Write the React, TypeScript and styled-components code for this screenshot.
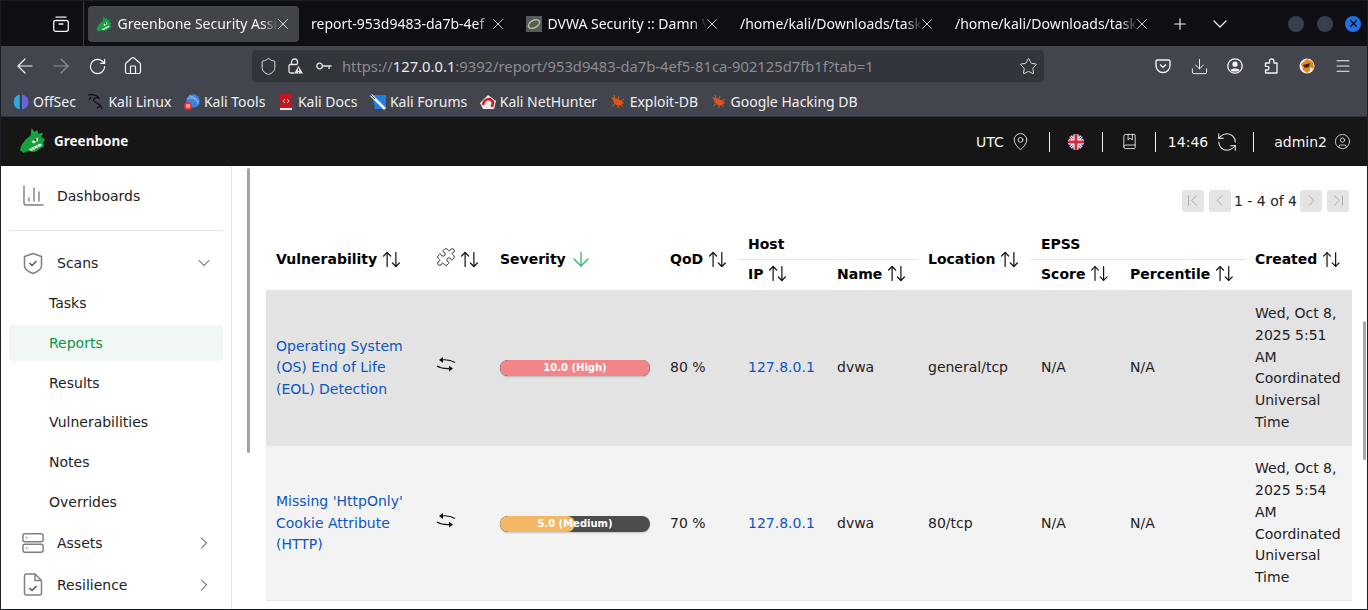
import React from 'react'
import styled, { createGlobalStyle } from 'styled-components'
import {
  ArrowDown, ArrowLeft, ArrowRight, ArrowUpDown, BookMarked, ChevronDown, ChevronFirst, ChevronLast, ChevronLeft,
  ChevronRight, CircleUser, Download, House, MapPin, Menu, Plus, Puzzle,
  RefreshCcw, RotateCw, Shield, Star, X,
} from 'lucide-react'

const GlobalStyle = createGlobalStyle`
  html, body { margin: 0; padding: 0; height: 610px; overflow: hidden; background: #fff; }
  body { font-family: "DejaVu Sans", sans-serif; }
  * { box-sizing: border-box; }
`

const chromeFont = `"Noto Sans", "Open Sans", sans-serif`

const Window = styled.div`
  width: 1368px;
  height: 610px;
  display: flex;
  flex-direction: column;
  overflow: hidden;
  position: relative;
  border: 1px solid #1c1e26;
`

const TabStrip = styled.div`
  height: 45px;
  flex: none;
  background: #0e0f14;
  display: flex;
  align-items: center;
  padding-left: 50px;
  font-family: ${chromeFont};
  font-size: 14px;
`

const TabsButton = styled.div`
  width: 33px;
  height: 45px;
  padding-left: 2px;
  display: flex;
  align-items: center;
  color: #f1f1f1;
  border-right: 1px solid #3a3c44;
`

const Tab = styled.div<{ $active?: boolean; $width: number }>`
  width: ${p => p.$width}px;
  height: 36px;
  flex: none;
  display: flex;
  align-items: center;
  gap: 5.5px;
  padding: 0 7px 0 ${p => (p.$active ? 8 : 12)}px;
  border-radius: 4px;
  margin-left: ${p => (p.$active ? 4 : 0)}px;
  background: ${p => (p.$active ? '#42444c' : 'transparent')};
  color: #f4f4f5;
`

const TabTitle = styled.span`
  flex: 1;
  min-width: 0;
  white-space: nowrap;
  overflow: hidden;
  -webkit-mask-image: linear-gradient(to right, #000 calc(100% - 16px), transparent);
  mask-image: linear-gradient(to right, #000 calc(100% - 16px), transparent);
`

const TabClose = styled.div`
  display: flex;
  margin-left: -9px;
`

const StripButton = styled.div<{ $left: number }>`
  margin-left: ${p => p.$left}px;
  display: flex;
  color: #f4f4f5;
`

const WindowControls = styled.div`
  margin-left: auto;
  margin-right: 6px;
  display: flex;
  gap: 12.5px;
`

const WindowDot = styled.div<{ $close?: boolean }>`
  width: 16px;
  height: 16px;
  border-radius: 50%;
  background: ${p => (p.$close ? '#2170e8' : '#3a3e4c')};
  color: #0e0f14;
  display: flex;
  align-items: center;
  justify-content: center;
`

const Toolbar = styled.div`
  height: 38px;
  flex: none;
  background: #42454e;
  display: flex;
  align-items: center;
  padding: 2px 0 0 6px;
  color: #f4f4f5;
  font-family: ${chromeFont};
`

const NavGroup = styled.div`
  width: 245px;
  flex: none;
  display: flex;
  align-items: center;
`

const ToolSlot = styled.div<{ $muted?: boolean }>`
  width: 36px;
  flex: none;
  display: flex;
  justify-content: center;
  color: ${p => (p.$muted ? '#8f9096' : 'inherit')};
`

const UrlBar = styled.div`
  width: 792px;
  height: 32px;
  flex: none;
  border-radius: 4px;
  background: #33353c;
  display: flex;
  align-items: center;
  padding: 0 6px 0 7px;
  color: #e4e4e6;
`

const UrlIcon = styled.div<{ $right: number }>`
  display: flex;
  margin-right: ${p => p.$right}px;
`

const UrlText = styled.div`
  font-size: 14.75px;
  line-height: 32px;
  color: #8b8c92;
  white-space: nowrap;
  flex: 1;
  strong { font-weight: 400; color: #e9e9ea; }
`

const ToolGroup = styled.div`
  margin-left: 101px;
  display: flex;
  align-items: center;
`

const BookmarkBar = styled.div`
  height: 33px;
  flex: none;
  background: #42454e;
  border-bottom: 1px solid #30323a;
  display: flex;
  align-items: center;
  padding: 3px 0 0 12px;
  gap: 12.5px;
  font-family: ${chromeFont};
  font-size: 14px;
  color: #f0f0f1;
`

const Bookmark = styled.div`
  display: flex;
  align-items: center;
  gap: 4px;
  white-space: nowrap;
`

const FaviconSlot = styled.div`
  width: 16px;
  display: flex;
  justify-content: center;
`

const AppHeader = styled.div`
  height: 49px;
  flex: none;
  background: #161616;
  color: #f4f4f4;
  display: flex;
  align-items: center;
  padding-left: 18px;
  font-size: 14px;
`

const Brand = styled.div`
  display: flex;
  align-items: center;
  gap: 8px;
  font-family: "Noto Sans", sans-serif;
  font-weight: 700;
  font-size: 13.5px;
  line-height: 18px;
  padding-bottom: 2px;
`

const HeaderTools = styled.div`
  margin-left: auto;
  margin-right: 16px;
  display: flex;
  align-items: center;
`

const HeaderSection = styled.div<{ $l: number; $r: number; $gap?: number }>`
  display: flex;
  align-items: center;
  gap: ${p => p.$gap ?? 0}px;
  padding: 0 ${p => p.$r}px 0 ${p => p.$l}px;
  height: 20px;
  border-left: 1px solid #f0f0f0;
  &:first-child { border-left: none; }
`

const Body = styled.div`
  flex: 1;
  min-height: 0;
  display: flex;
  background: #fff;
`

const Sidebar = styled.nav`
  width: 231px;
  flex: none;
  border-right: 1px solid #e6e6e6;
  padding: 8px 8px 0;
  font-size: 14px;
  color: #1f2124;
  overflow: hidden;
`

const NavMain = styled.div<{ $h?: number }>`
  height: ${p => p.$h ?? 42}px;
  display: flex;
  align-items: center;
  padding-left: 13px;
  span { margin-left: 13px; color: #222; flex: 1; }
`

const IconSlot = styled.div`
  width: 22px;
  display: flex;
  justify-content: center;
`

const NavChevron = styled.div`
  margin-right: 9.5px;
  display: flex;
  color: #333;
`

const NavDivider = styled.div`
  height: 1px;
  background: #e4e4e4;
  margin: 12px 0 10px;
`

const NavSub = styled.div<{ $active?: boolean }>`
  height: 36px;
  margin-bottom: 3.8px;
  padding-left: 40px;
  display: flex;
  align-items: center;
  border-radius: 4px;
  background: ${p => (p.$active ? '#f0f7f4' : 'transparent')};
  color: ${p => (p.$active ? '#11934a' : '#222')};
`

const Rail = styled.div`
  width: 34px;
  flex: none;
  padding: 2px 0 0 15px;
`

const RailThumb = styled.div`
  width: 3px;
  height: 285px;
  border-radius: 2px;
  background: #a4a4a4;
`

const Main = styled.main`
  flex: 1;
  min-width: 0;
  position: relative;
  padding-right: 14px;
`

const Pager = styled.div`
  margin-top: 23px;
  height: 23px;
  display: flex;
  align-items: center;
  justify-content: flex-end;
  padding-right: 4px;
  gap: 3px;
  font-size: 14px;
  color: #222;
`

const PagerGroup = styled.div`
  display: flex;
  gap: 5px;
`

const PagerButton = styled.div`
  width: 22px;
  height: 22px;
  border-radius: 3px;
  background: #e4e4e4;
  color: #a2a2a2;
  display: flex;
  align-items: center;
  justify-content: center;
`

const Table = styled.table`
  width: 1086px;
  margin-top: 16px;
  table-layout: fixed;
  border-collapse: collapse;
  font-size: 14px;
  color: #1f2124;
`

const Head = styled.th<{ $group?: boolean; $sub?: boolean }>`
  text-align: left;
  padding: ${p => (p.$group ? 2 : 0)}px 10px ${p => (p.$sub ? 2 : 0)}px;
  height: ${p => (p.$group || p.$sub ? '31px' : 'auto')};
  font-weight: 700;
  white-space: nowrap;
  color: #000;
  border-bottom: ${p => (p.$group ? '1px solid #e4e4e4' : 'none')};
  vertical-align: middle;
`

const HeadInner = styled.div`
  display: flex;
  align-items: center;
  gap: 4px;
`

const PuzzleHead = styled.div`
  display: flex;
  margin: 0 -1px 4px 0;
`

const SortedArrow = styled.div`
  display: flex;
  margin-left: -1px;
  color: #22b35e;
`

const Row = styled.tr<{ $alt?: boolean }>`
  background: ${p => (p.$alt ? '#f3f3f3' : '#e3e3e3')};
  height: 155px;
  border-bottom: 1px solid #e6e6e6;
`

const Cell = styled.td`
  padding: 2px 10px 0;
  line-height: 21.7px;
  vertical-align: middle;
`

const TableLink = styled.a`
  color: #0c56c0;
`

const SeverityBar = styled.div`
  position: relative;
  width: 150px;
  height: 16px;
  border-radius: 8px;
  overflow: hidden;
  background: #4c4c4c;
  box-shadow: 0 1px 2px rgba(0, 0, 0, 0.2);
  display: flex;
  align-items: center;
  justify-content: center;
`

const SeverityFill = styled.div<{ $color: string }>`
  position: absolute;
  left: 0;
  top: 0;
  bottom: 0;
  background: ${p => p.$color};
  border-radius: 8px;
`

const SeverityLabel = styled.span`
  position: relative;
  color: #fff;
  font-size: 10px;
  font-weight: 700;
  line-height: 16px;
`

const PageScroll = styled.div`
  position: absolute;
  right: 1px;
  top: 155px;
  width: 3px;
  height: 139px;
  border-radius: 2px;
  background: #a8a8a8;
`

const Sort = () => <ArrowUpDown size={21} strokeWidth={1.4} color="#111" />

const Dragon = ({ size }: { size: number }) => (
  <svg width={size} height={size} viewBox="0 0 28 28">
    <path d="M1 24 L3 18 L8 12 L12 9 L13 1 L16 5 L19 3 L20 7 L25 6 L23 10 L27 13 L25 16 L26 20 L16 26 L9 25 L5 27 Z" fill="#17a23f" />
    <path d="M10 23 L22 17 L24 19 L13 25 Z" fill="#e9f4ea" />
    <path d="M13 22 L14 24 M16 21 L17 23 M19 19 L20 21" stroke="#17a23f" strokeWidth="0.8" />
    <path d="M13 15 L19 11 L20 14 L15 17 Z" fill="#e9f4ea" />
    <circle cx="17" cy="13.5" r="1.2" fill="#111" />
  </svg>
)

const Bug = () => (
  <svg width="15" height="13" viewBox="0 0 15 13">
    <path d="M1 2 L5 3 L10 5 L14 8 L11 10 L8 11 L4 8 L3 5 Z" fill="#e2531a" />
    <path d="M5 3 L4 0 M8 4 L9 1 M11 6 L14 4 M5 9 L2 11 M8 11 L8 13 M11 10 L13 12" stroke="#d9641e" strokeWidth="0.9" />
  </svg>
)

const RepeatIcon = () => (
  <svg width="20" height="15" viewBox="0 0 20 15" fill="none" stroke="#111" strokeWidth="1.2">
    <path d="M5 3 C9 2.5 15 3 19 5.5" />
    <path d="M1 9 C5 11.5 10 12 15 11.5" />
    <path d="M7 0 L3 3 L7 6 Z" fill="#111" stroke="none" />
    <path d="M13 8.8 L17 11.5 L13 14.5 Z" fill="#111" stroke="none" />
  </svg>
)

const TabsIcon = () => (
  <svg width="16" height="16" viewBox="0 0 16 16" fill="none" stroke="currentColor" strokeWidth="1.3">
    <rect x="0.7" y="4.5" width="14.6" height="10.8" rx="2" />
    <path d="M2.5 1.2 H13.5 M5.5 8 H10.5" />
  </svg>
)

const LockWarning = () => (
  <svg width="16" height="16" viewBox="0 0 16 16" fill="none" stroke="currentColor" strokeWidth="1.3">
    <path d="M10.5 6.5 H3.5 A1.5 1.5 0 0 0 2 8 V13.5 A1.5 1.5 0 0 0 3.5 15 H7" />
    <path d="M4.5 6.5 V4 A3 3 0 0 1 10.5 4 V6" />
    <path d="M11.5 8 L16 15.5 H7 Z" fill="currentColor" stroke="none" />
    <path d="M11.5 10.5 V13 M11.5 14 V14.8" stroke="#33353c" strokeWidth="1" />
  </svg>
)

const KeyIcon = () => (
  <svg width="16" height="10" viewBox="0 0 16 10" fill="none" stroke="currentColor" strokeWidth="1.3">
    <circle cx="3.6" cy="5" r="2.8" />
    <path d="M6.5 5 H15.5 M13 5 V8" />
  </svg>
)

const PocketIcon = () => (
  <svg width="16" height="16" viewBox="0 0 16 16" fill="none" stroke="currentColor" strokeWidth="1.4">
    <path d="M2.5 2 H13.5 A1.5 1.5 0 0 1 15 3.5 V7.5 A7 7 0 0 1 1 7.5 V3.5 A1.5 1.5 0 0 1 2.5 2 Z" />
    <path d="M5 6.5 L8 9.3 L11 6.5" />
  </svg>
)

const AccountIcon = () => (
  <svg width="16" height="16" viewBox="0 0 16 16" fill="none" stroke="currentColor" strokeWidth="1.3">
    <circle cx="8" cy="8" r="7.2" />
    <circle cx="8" cy="6.2" r="2.6" fill="currentColor" stroke="none" />
    <path d="M3.5 12 C4.5 10 11.5 10 12.5 12 L11 13.6 H5 Z" fill="currentColor" stroke="none" />
  </svg>
)

const ExtensionIcon = () => (
  <svg width="16" height="16" viewBox="0 0 16 16" fill="none" stroke="currentColor" strokeWidth="1.3">
    <path d="M2.5 5 H6.5 V3 A2.2 2.2 0 0 1 10.9 3 V5 H14 V15 H2.5 V12 H4.2 A1.8 1.8 0 0 0 4.2 8.4 H2.5 Z" strokeLinejoin="round" />
  </svg>
)

const FoxIcon = () => (
  <svg width="16" height="16" viewBox="0 0 16 16">
    <circle cx="8" cy="8" r="7.5" fill="#f4f0ea" />
    <path d="M2 6 L8 1 L14 4 L15 10 L8 15 L4 12 Z" fill="#e8861c" />
    <path d="M4 7 L11 5 L10 9 L6 10 Z" fill="#3a2a1a" />
    <path d="M11 9 L14 11 L11 14 Z M1 8 L4 10 L2 12 Z" fill="#f4f0ea" />
  </svg>
)

const ChartIcon = () => (
  <svg width="22" height="22" viewBox="0 0 22 22" fill="none" stroke="#808080" strokeWidth="1.4" strokeLinecap="round">
    <path d="M2 1 V18 A2 2 0 0 0 4 20 H21" />
    <path d="M7 13 V16 M12 3 V16 M17 7 V16" />
  </svg>
)

const ShieldCheckIcon = () => (
  <svg width="20" height="23" viewBox="0 0 20 23" fill="none" stroke="#808080" strokeWidth="1.5" strokeLinejoin="round">
    <path d="M10 1.5 L18.5 4.5 V14 C18.5 17 14 20 10 21.5 C6 20 1.5 17 1.5 14 V4.5 Z" />
    <path d="M6.5 11 L9 13.5 L13.5 9" stroke="#555" />
  </svg>
)

const ServerIcon = () => (
  <svg width="24" height="22" viewBox="0 0 24 22" fill="none" stroke="#808080" strokeWidth="1.6">
    <rect x="1" y="1" width="22" height="8.6" rx="2.2" />
    <rect x="1" y="12.4" width="22" height="8.6" rx="2.2" />
    <path d="M4.5 5.3 H5.8 M4.5 16.7 H5.8" />
  </svg>
)

const FileCheckIcon = () => (
  <svg width="20" height="23" viewBox="0 0 20 23" fill="none" stroke="#808080" strokeWidth="1.5" strokeLinejoin="round">
    <path d="M12 1 H3.5 A2 2 0 0 0 1.5 3 V20 A2 2 0 0 0 3.5 22 H16.5 A2 2 0 0 0 18.5 20 V7.5 Z" />
    <path d="M12 1 V7.5 H18.5" />
    <path d="M6.5 15 L9 17.5 L13.5 13" stroke="#555" />
  </svg>
)

const FlagIcon = () => (
  <svg width="16" height="16" viewBox="0 0 16 16">
    <defs><clipPath id="flag"><circle cx="8" cy="8" r="8" /></clipPath></defs>
    <g clipPath="url(#flag)">
      <rect width="16" height="16" fill="#26408f" />
      <path d="M0 0 L16 16 M16 0 L0 16" stroke="#fff" strokeWidth="3" />
      <path d="M0 0 L16 16 M16 0 L0 16" stroke="#d22a3c" strokeWidth="1" />
      <path d="M8 0 V16 M0 8 H16" stroke="#fff" strokeWidth="5" />
      <path d="M8 0 V16 M0 8 H16" stroke="#d22a3c" strokeWidth="3" />
    </g>
  </svg>
)

const favicons: [string, React.ReactNode][] = [
  ['OffSec', (
    <svg width="16" height="16" viewBox="0 0 16 16">
      <circle cx="8" cy="8" r="7.5" fill="#4f7ad8" />
      <path d="M1 8 A7 7 0 0 1 6 1 V15 A7 7 0 0 1 1 8 Z" fill="#2ea8d8" />
      <path d="M15 8 A7 7 0 0 0 10 1 V15 A7 7 0 0 0 15 8 Z" fill="#7a5ad8" />
      <path d="M8 0 V16" stroke="#3a3d46" strokeWidth="2" />
    </svg>
  )],
  ['Kali Linux', (
    <svg width="16" height="16" viewBox="0 0 16 16" fill="none" stroke="#0c0c0c" strokeWidth="1.2">
      <path d="M0 1 C4 0 9 1 11 4 C8 3 5 4 6 7 C8 10 13 9 14 15" />
      <path d="M3 3 L1 6 M12 12 L9 14" />
    </svg>
  )],
  ['Kali Tools', (
    <svg width="16" height="16" viewBox="0 0 16 16">
      <circle cx="9" cy="7" r="6.8" fill="#3a84e0" />
      <path d="M3 5 C7 3 11 4 15 8 M5 2 C9 2 13 5 14 10" stroke="#a9cdf5" strokeWidth="0.8" fill="none" />
      <circle cx="4" cy="12" r="4" fill="#e03636" />
      <path d="M2 11 H6 M3 11 V14 M5 11 V14" stroke="#fff" strokeWidth="0.8" />
    </svg>
  )],
  ['Kali Docs', (
    <svg width="14" height="16" viewBox="0 0 14 16">
      <rect x="1" y="0" width="12" height="15" rx="1" fill="#c8141c" />
      <rect x="1" y="14" width="12" height="2" fill="#eee" />
      <path d="M6 5 L4 7 L6 9 M8 5 L10 7 L8 9" stroke="#fff" strokeWidth="1" fill="none" />
    </svg>
  )],
  ['Kali Forums', (
    <svg width="16" height="16" viewBox="0 0 16 16">
      <path d="M2 1 H16 V15 H5 Z" fill="#1d7fe0" />
      <path d="M1 1 L15 15" stroke="#f2f2f2" strokeWidth="2.6" />
      <path d="M1 1 L5 5" stroke="#33353c" strokeWidth="1" />
    </svg>
  )],
  ['Kali NetHunter', (
    <svg width="16" height="16" viewBox="0 0 16 16">
      <path d="M0 9 L8 1 L16 7 L14 15 L3 15 Z" fill="#ececec" />
      <path d="M3 11 C4 5 10 3 13 8 L12 13" stroke="#c81e24" strokeWidth="2.6" fill="none" />
    </svg>
  )],
  ['Exploit-DB', <Bug />],
  ['Google Hacking DB', <Bug />],
]

const tabs = [
  { title: 'Greenbone Security Assi', width: 211, active: true, icon: <Dragon size={16} /> },
  { title: 'report-953d9483-da7b-4ef', width: 215 },
  { title: 'DVWA Security :: Damn \\', width: 214, icon: (
    <svg width="16" height="16" viewBox="0 0 16 16">
      <rect width="16" height="16" fill="#57595e" />
      <ellipse cx="8" cy="8" rx="6" ry="3.6" fill="none" stroke="#b5cc8c" strokeWidth="1.5" transform="rotate(-30 8 8)" />
    </svg>
  ) },
  { title: '/home/kali/Downloads/task', width: 215 },
  { title: '/home/kali/Downloads/task', width: 215 },
]

const subNav = ['Tasks', 'Reports', 'Results', 'Vulnerabilities', 'Notes', 'Overrides']

const rows = [
  {
    name: 'Operating System (OS) End of Life (EOL) Detection', sev: '10.0 (High)', pct: 100, color: '#f2858a',
    qod: '80 %', location: 'general/tcp', time: 'Wed, Oct 8, 2025 5:51 AM Coordinated Universal Time',
  },
  {
    name: "Missing 'HttpOnly' Cookie Attribute (HTTP)", sev: '5.0 (Medium)', pct: 50, color: '#f4b763',
    qod: '70 %', location: '80/tcp', time: 'Wed, Oct 8, 2025 5:54 AM Coordinated Universal Time',
  },
]

export default function App() {
  return (
    <Window>
      <GlobalStyle />
      <TabStrip>
        <TabsButton><TabsIcon /></TabsButton>
        {tabs.map((t, i) => (
          <Tab key={i} $active={t.active} $width={t.width}>
            {t.icon}
            <TabTitle>{t.title}</TabTitle>
            <TabClose><X size={18} strokeWidth={1.1} /></TabClose>
          </Tab>
        ))}
        <StripButton $left={13}><Plus size={18} strokeWidth={1.5} /></StripButton>
        <StripButton $left={19}><ChevronDown size={24} strokeWidth={1.2} /></StripButton>
        <WindowControls>
          <WindowDot />
          <WindowDot />
          <WindowDot $close><X size={11} strokeWidth={3} /></WindowDot>
        </WindowControls>
      </TabStrip>
      <Toolbar>
        <NavGroup>
          <ToolSlot><ArrowLeft size={24} strokeWidth={1.2} /></ToolSlot>
          <ToolSlot $muted><ArrowRight size={24} strokeWidth={1.2} /></ToolSlot>
          <ToolSlot><RotateCw size={19} strokeWidth={1.5} /></ToolSlot>
          <ToolSlot><House size={20} strokeWidth={1.4} /></ToolSlot>
        </NavGroup>
        <UrlBar>
          <UrlIcon $right={9}><Shield size={19} strokeWidth={1.2} /></UrlIcon>
          <UrlIcon $right={13}><LockWarning /></UrlIcon>
          <UrlIcon $right={10}><KeyIcon /></UrlIcon>
          <UrlText>https://<strong>127.0.0.1</strong>:9392/report/953d9483-da7b-4ef5-81ca-902125d7fb1f?tab=1</UrlText>
          <Star size={19} strokeWidth={1.2} />
        </UrlBar>
        <ToolGroup>
          <ToolSlot><PocketIcon /></ToolSlot>
          <ToolSlot><Download size={19} strokeWidth={1.2} /></ToolSlot>
          <ToolSlot><AccountIcon /></ToolSlot>
          <ToolSlot><ExtensionIcon /></ToolSlot>
          <ToolSlot><FoxIcon /></ToolSlot>
          <ToolSlot><Menu size={18} strokeWidth={1.4} /></ToolSlot>
        </ToolGroup>
      </Toolbar>
      <BookmarkBar>
        {favicons.map(([name, icon]) => (
          <Bookmark key={name}><FaviconSlot>{icon}</FaviconSlot>{name}</Bookmark>
        ))}
      </BookmarkBar>
      <AppHeader>
        <Brand><Dragon size={27} />Greenbone</Brand>
        <HeaderTools>
          <HeaderSection $l={0} $r={19} $gap={7}>UTC <MapPin size={19} strokeWidth={1.1} /></HeaderSection>
          <HeaderSection $l={18} $r={18}><FlagIcon /></HeaderSection>
          <HeaderSection $l={18} $r={17}><BookMarked size={17} strokeWidth={1.2} /></HeaderSection>
          <HeaderSection $l={12} $r={15} $gap={8}>14:46 <RefreshCcw size={22} strokeWidth={1.1} /></HeaderSection>
          <HeaderSection $l={20} $r={0} $gap={7}>admin2 <CircleUser size={17} strokeWidth={1.1} /></HeaderSection>
        </HeaderTools>
      </AppHeader>
      <Body>
        <Sidebar>
          <NavMain $h={44}><IconSlot><ChartIcon /></IconSlot><span>Dashboards</span></NavMain>
          <NavDivider />
          <NavMain $h={44}><IconSlot><ShieldCheckIcon /></IconSlot><span>Scans</span><NavChevron><ChevronDown size={20} strokeWidth={1.2} /></NavChevron></NavMain>
          {subNav.map(item => (
            <NavSub key={item} $active={item === 'Reports'}>{item}</NavSub>
          ))}
          <NavMain $h={38}><IconSlot><ServerIcon /></IconSlot><span>Assets</span><NavChevron><ChevronRight size={20} strokeWidth={1.2} /></NavChevron></NavMain>
          <NavMain $h={46}><IconSlot><FileCheckIcon /></IconSlot><span>Resilience</span><NavChevron><ChevronRight size={20} strokeWidth={1.2} /></NavChevron></NavMain>
        </Sidebar>
        <Rail><RailThumb /></Rail>
        <Main>
          <Pager>
            <PagerGroup>
              <PagerButton><ChevronFirst size={19} strokeWidth={1.1} /></PagerButton>
              <PagerButton><ChevronLeft size={19} strokeWidth={1.1} /></PagerButton>
            </PagerGroup>
            1 - 4 of 4
            <PagerGroup>
              <PagerButton><ChevronRight size={19} strokeWidth={1.1} /></PagerButton>
              <PagerButton><ChevronLast size={19} strokeWidth={1.1} /></PagerButton>
            </PagerGroup>
          </Pager>
          <Table>
            <colgroup>
              {[160, 64, 170, 78, 89, 91, 113, 89, 125, 107].map((w, i) => <col key={i} width={w} />)}
            </colgroup>
            <thead>
              <tr>
                <Head rowSpan={2}><HeadInner>Vulnerability <Sort /></HeadInner></Head>
                <Head rowSpan={2}><HeadInner><PuzzleHead><Puzzle size={20} strokeWidth={0.95} /></PuzzleHead><Sort /></HeadInner></Head>
                <Head rowSpan={2}><HeadInner>Severity <SortedArrow><ArrowDown size={24} strokeWidth={1.2} /></SortedArrow></HeadInner></Head>
                <Head rowSpan={2}><HeadInner>QoD <Sort /></HeadInner></Head>
                <Head colSpan={2} $group>Host</Head>
                <Head rowSpan={2}><HeadInner>Location <Sort /></HeadInner></Head>
                <Head colSpan={2} $group>EPSS</Head>
                <Head rowSpan={2}><HeadInner>Created <Sort /></HeadInner></Head>
              </tr>
              <tr>
                <Head $sub><HeadInner>IP <Sort /></HeadInner></Head>
                <Head $sub><HeadInner>Name <Sort /></HeadInner></Head>
                <Head $sub><HeadInner>Score <Sort /></HeadInner></Head>
                <Head $sub><HeadInner>Percentile <Sort /></HeadInner></Head>
              </tr>
            </thead>
            <tbody>
              {rows.map((r, i) => (
                <Row key={r.name} $alt={i === 1}>
                  <Cell><TableLink>{r.name}</TableLink></Cell>
                  <Cell><RepeatIcon /></Cell>
                  <Cell>
                    <SeverityBar>
                      <SeverityFill $color={r.color} style={{ width: `${r.pct}%` }} />
                      <SeverityLabel>{r.sev}</SeverityLabel>
                    </SeverityBar>
                  </Cell>
                  <Cell>{r.qod}</Cell>
                  <Cell><TableLink>127.8.0.1</TableLink></Cell>
                  <Cell>dvwa</Cell>
                  <Cell>{r.location}</Cell>
                  <Cell>N/A</Cell>
                  <Cell>N/A</Cell>
                  <Cell>{r.time}</Cell>
                </Row>
              ))}
            </tbody>
          </Table>
          <PageScroll />
        </Main>
      </Body>
    </Window>
  )
}
